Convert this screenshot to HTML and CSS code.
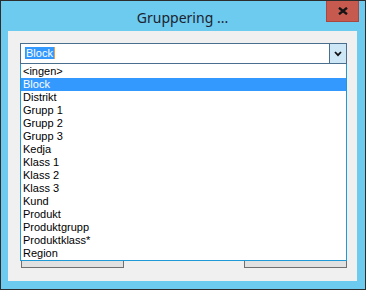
FILE: index.html
```html
<!DOCTYPE html>
<html>
<head>
<meta charset="utf-8">
<link rel="stylesheet" href="styles.css">
</head>
<body>
<div class="window">
  <div class="titlebar">
    <span></span>
    <span class="title">Gruppering ...</span>
    <button class="close" aria-label="Stäng">
      <svg width="10" height="8" viewBox="0 0 10 8"><path d="M1 0.8 L9 7.2 M9 0.8 L1 7.2" stroke="#151515" stroke-width="2.4" fill="none"/></svg>
    </button>
  </div>
  <div class="content">
    <div class="combo">
      <div class="combo-field"><span class="sel">Block</span></div>
      <div class="combo-btn">
        <svg width="8" height="6" viewBox="0 0 8 6"><path d="M1 1 L4 4.2 L7 1" stroke="#111" stroke-width="1.8" fill="none"/></svg>
      </div>
      <ul class="droplist">
        <li>&lt;ingen&gt;</li>
        <li class="active">Block</li>
        <li>Distrikt</li>
        <li>Grupp 1</li>
        <li>Grupp 2</li>
        <li>Grupp 3</li>
        <li>Kedja</li>
        <li>Klass 1</li>
        <li>Klass 2</li>
        <li>Klass 3</li>
        <li>Kund</li>
        <li>Produkt</li>
        <li>Produktgrupp</li>
        <li>Produktklass*</li>
        <li>Region</li>
      </ul>
    </div>
    <div class="buttons">
      <button class="btn">OK</button>
      <button class="btn">Avbryt</button>
    </div>
  </div>
</div>
</body>
</html>
```
FILE: styles.css
```css
html, body {
  margin: 0;
  padding: 0;
  background: #ffffff;
}
.window {
  width: 366px;
  height: 290px;
  box-sizing: border-box;
  border: 1px solid #2d2d2d;
  background: #6ccbee;
  padding: 0 8px 8px 7px;
  display: flex;
  flex-direction: column;
}
.titlebar {
  height: 30px;
  display: grid;
  grid-template-columns: 1fr auto 1fr;
  align-items: start;
}
.title {
  font-family: "Noto Sans", "Open Sans", sans-serif;
  font-size: 14px;
  color: #1c2230;
  line-height: 20px;
  padding-top: 7px;
}
.close {
  justify-self: end;
  width: 33px;
  height: 21px;
  margin: 0;
  padding: 0;
  border: 1px solid #a8463f;
  border-top: none;
  background: #c75a4f;
  display: flex;
  align-items: center;
  justify-content: center;
  margin-right: -2px;
}
.content {
  flex: 1;
  background: #f0f0f0;
  padding: 12px 10px 13px 12px;
  display: flex;
  flex-direction: column;
  justify-content: space-between;
}
.combo {
  position: relative;
  height: 21px;
  box-sizing: border-box;
  border: 1px solid #4a6f8e;
  background: #fff;
  display: flex;
}
.combo-field {
  flex: 1;
  padding: 3px 0 0 4px;
  font-family: "Liberation Sans", Arial, sans-serif;
  font-size: 11px;
  line-height: 13px;
}
.sel {
  background: #3399ff;
  color: #fff;
  padding: 0 1px;
  border-right: 1px solid #e8a04a;
}
.combo-btn {
  width: 16px;
  border-left: 1px solid #4a6f8e;
  background: #cde7f6;
  display: flex;
  align-items: center;
  justify-content: center;
}
.droplist {
  position: absolute;
  top: 20px;
  left: -1px;
  width: 327px;
  box-sizing: border-box;
  margin: 0;
  padding: 0;
  list-style: none;
  background: #fff;
  border: 1px solid #1e9ad6;
  border-top: none;
  font-family: "Liberation Sans", Arial, sans-serif;
  font-size: 11px;
  color: #000;
  z-index: 2;
  padding-top: 1px;
}
.droplist li {
  height: 13px;
  line-height: 13px;
  padding-left: 2px;
}
.droplist li.active {
  background: #3399ff;
  color: #fff;
}
.buttons {
  display: flex;
  justify-content: space-between;
  padding-left: 1px;
}
.btn {
  width: 103px;
  height: 23px;
  margin: 0;
  padding: 0 0 8px;
  box-sizing: border-box;
  border: 1px solid #707070;
  background: #e1e1e1;
  font-family: "Liberation Sans", Arial, sans-serif;
  font-size: 11px;
  line-height: 12px;
}
```
